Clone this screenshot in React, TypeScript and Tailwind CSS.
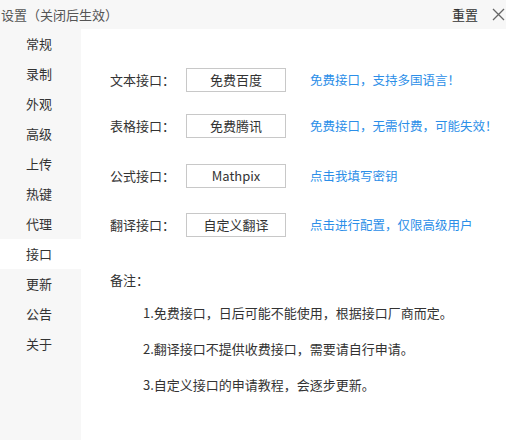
import React from "react";

const menu = ["常规", "录制", "外观", "高级", "上传", "热键", "代理", "接口", "更新", "公告", "关于"];

const rows = [
  { label: "文本接口：", value: "免费百度", link: "免费接口，支持多国语言！", mt: "mt-[39px]" },
  { label: "表格接口：", value: "免费腾讯", link: "免费接口，无需付费，可能失效！", mt: "mt-[22px]" },
  { label: "公式接口：", value: "Mathpix", link: "点击我填写密钥", mt: "mt-[26px]" },
  { label: "翻译接口：", value: "自定义翻译", link: "点击进行配置，仅限高级用户", mt: "mt-[25px]" },
];

const notes = [
  "1.免费接口，日后可能不能使用，根据接口厂商而定。",
  "2.翻译接口不提供收费接口，需要请自行申请。",
  "3.自定义接口的申请教程，会逐步更新。",
];

export default function App() {
  return (
    <div
      className="w-[506px] h-[440px] bg-white text-[13px] text-[#333] overflow-hidden flex flex-col"
      style={{ fontFamily: '"Microsoft YaHei", "Noto Sans CJK SC", "Noto Sans", sans-serif' }}
    >
      <div className="h-[29px] bg-[#f7f7f7] flex items-center shrink-0">
        <span className="pl-[1px] text-[#555]">设置（关闭后生效）</span>
        <span className="ml-auto text-[#333]">重置</span>
        <svg className="ml-[14px] mr-[1px]" width="13" height="13" viewBox="0 0 13 13">
          <path d="M1 1 L12 12 M12 1 L1 12" stroke="#666" strokeWidth="1.3" fill="none" />
        </svg>
      </div>
      <div className="flex flex-1">
        <div className="w-[81px] bg-[#f7f7f7] shrink-0">
          {menu.map((m) => (
            <div
              key={m}
              className={`h-[30px] pl-[26px] flex items-center text-[#333] ${m === "接口" ? "bg-white" : ""}`}
            >
              {m}
            </div>
          ))}
        </div>
        <div className="flex-1 pl-[29px]">
          {rows.map((r) => (
            <div key={r.label} className={`flex items-center h-[24px] ${r.mt}`}>
              <span className="w-[76px] text-[#333]">{r.label}</span>
              <div className="w-[100px] h-[24px] border border-[#c8c8c8] flex items-center justify-center text-[#333]">
                {r.value}
              </div>
              <span className="ml-[24px] text-[12.5px] text-[#2b8ee8]">{r.link}</span>
            </div>
          ))}
          <div className="mt-[33px] h-[20px] flex items-center text-[#333]">备注：</div>
          <div className="pl-[33px] mt-[13px] flex flex-col gap-[16px] text-[#333]">
            {notes.map((n) => (
              <div key={n} className="h-[20px] flex items-center">
                {n}
              </div>
            ))}
          </div>
        </div>
      </div>
    </div>
  );
}
